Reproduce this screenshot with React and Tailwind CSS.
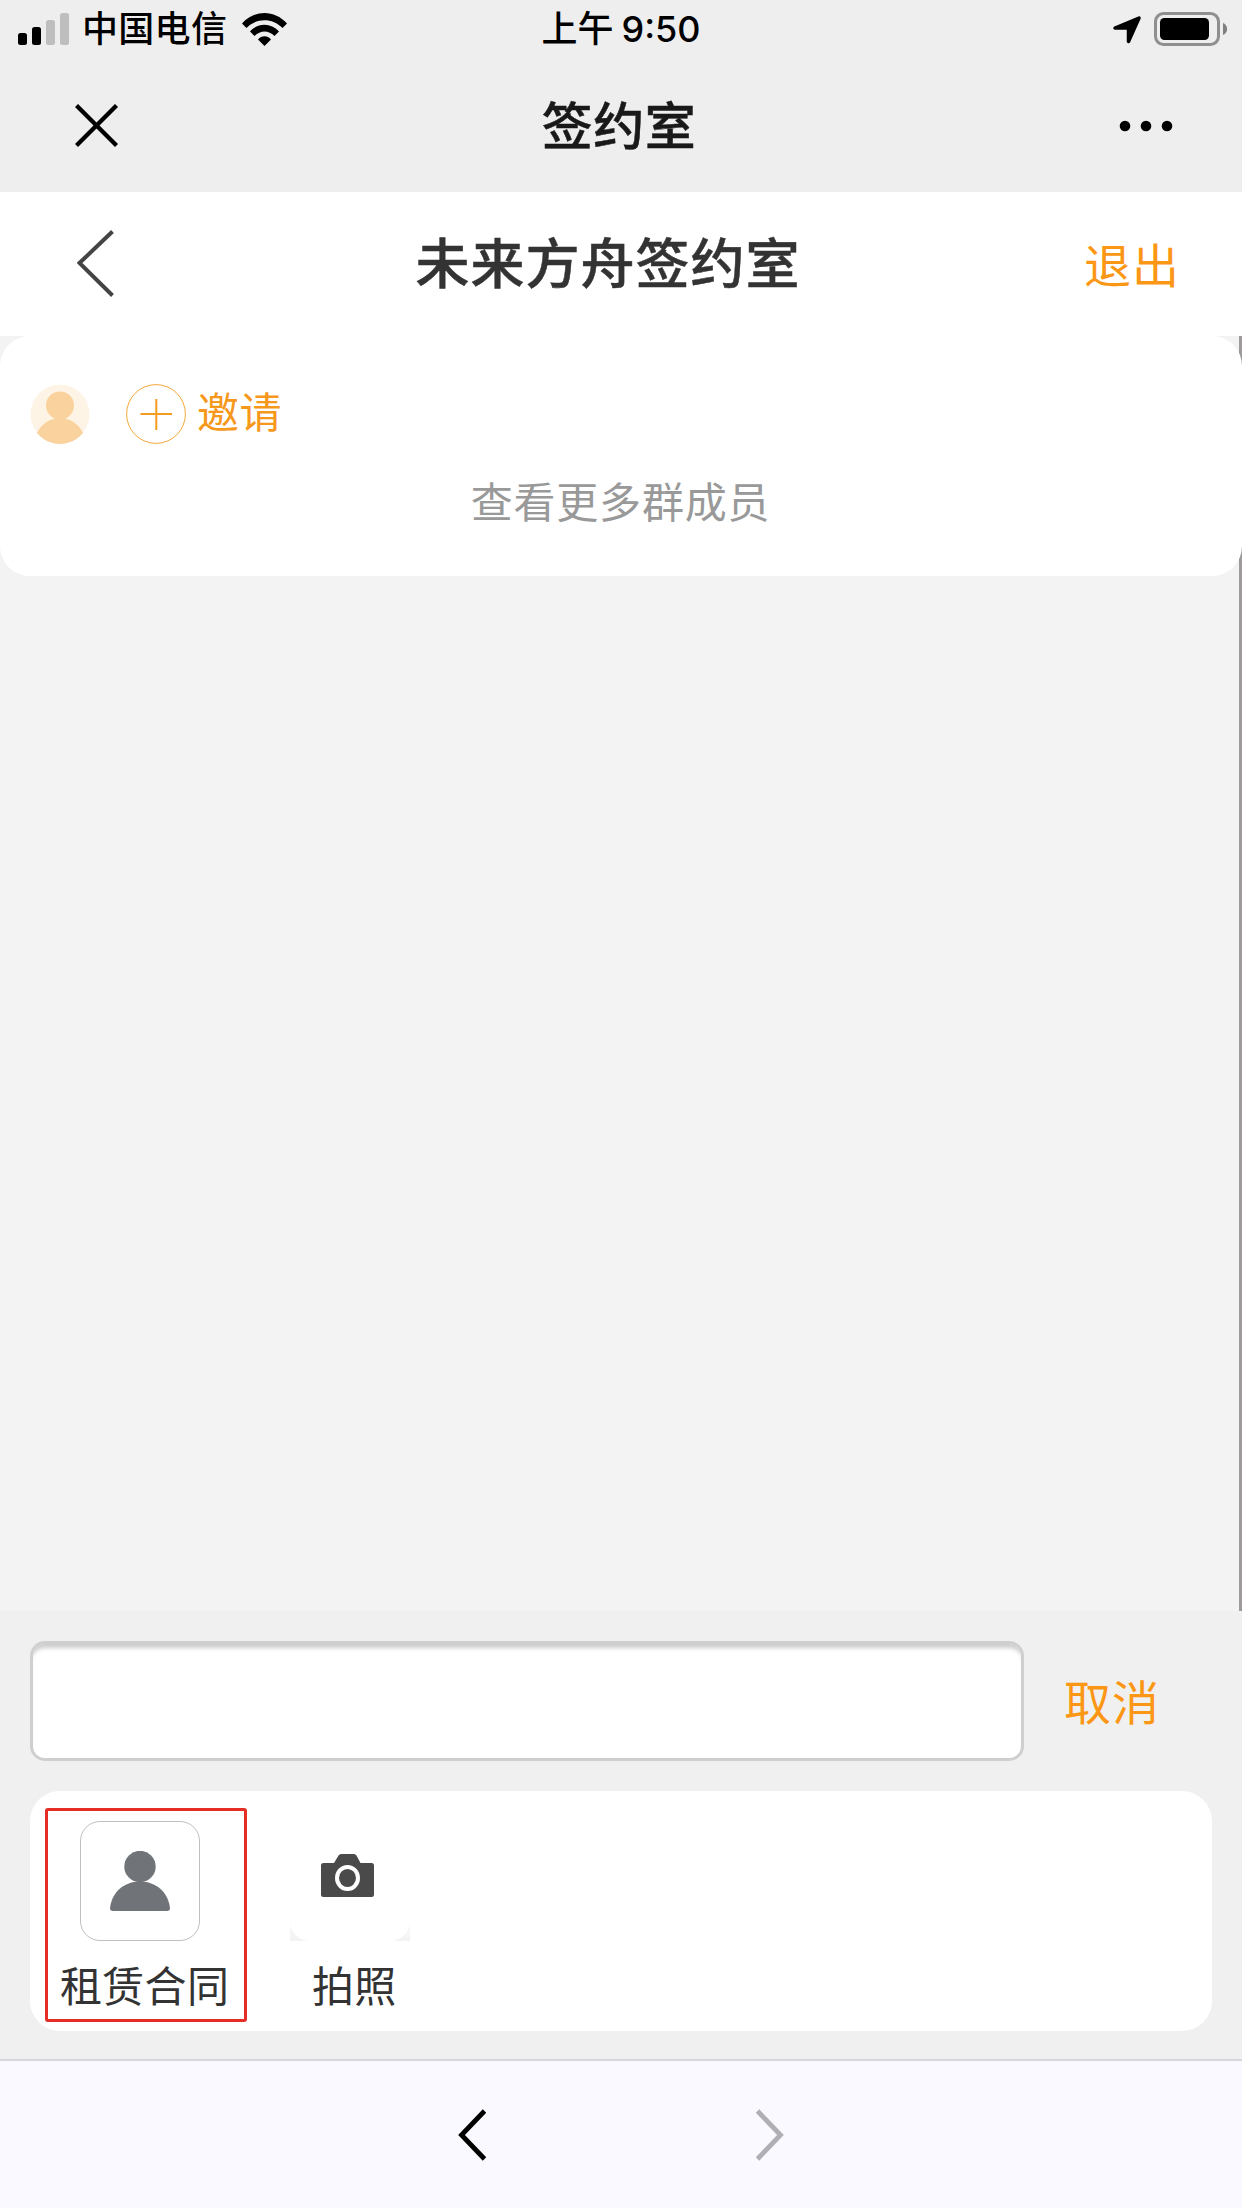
import { useState } from "react";

const actions = [
  { id: "contract", label: "租赁合同" },
  { id: "photo", label: "拍照" },
];

function StatusBar() {
  return (
    <div className="flex h-[60px] items-start justify-between text-black">
      <div className="flex w-[400px] pl-[18px]">
        <svg className="mt-[13px] h-8 w-[51px]" viewBox="0 0 51 32">
          <rect x="0" y="20" width="9" height="12" rx="2.5" />
          <rect x="14" y="14" width="9" height="18" rx="2.5" />
          <rect x="28" y="7" width="9" height="25" rx="2.5" fill="#bebebe" />
          <rect x="42" y="0" width="9" height="32" rx="2.5" fill="#bebebe" />
        </svg>
        <span className="ml-[13px] h-[60px] w-[146px] text-[36px] leading-[60px] font-medium tracking-[0.3px] whitespace-nowrap">
          中国电信
        </span>
        <svg className="mt-[13px] ml-[14px] h-[33px] w-[45px]" viewBox="0 0 45 33">
          <path d="M0 10.5C12.500 -3.500 32.500 -3.500 45 10.500L40.500 15C30.500 4.500 14.500 4.500 4.500 15Z" />
          <path d="M8 18.500C16 9.500 29 9.500 37 18.500L32.500 23C26.500 17 18.500 17 12.500 23Z" />
          <path d="M16 26.500C19.500 22.300 25.500 22.300 29 26.500L22.500 33Z" />
        </svg>
      </div>

      <div className="flex h-[60px] text-[36px] leading-[60px] font-medium whitespace-nowrap">
        <span>上午</span>
        <span className="ml-2 font-['Inter'] text-[36px] leading-[58px]">9:50</span>
      </div>

      <div className="flex w-[400px] justify-end pr-[15px]">
        <svg className="mt-4 mr-[13px] h-7 w-7" viewBox="0 0 28 28">
          <path
            d="M2 12L26 2L15.500 25.500V12Z"
            stroke="#000"
            strokeWidth="3.500"
            strokeLinejoin="round"
          />
        </svg>
        <svg className="mt-3 h-[34px] w-[73px]" viewBox="0 0 73 34">
          <rect
            x="1.500"
            y="1.500"
            width="63"
            height="31"
            rx="8"
            fill="none"
            stroke="#8f8f8f"
            strokeWidth="3"
          />
          <rect x="6" y="6" width="49" height="22" rx="4.500" />
          <path d="M69 11C74.500 13 74.500 21 69 23Z" fill="#808080" />
        </svg>
      </div>
    </div>
  );
}

function TitleBar() {
  return (
    <div className="flex h-[132px] items-center justify-between pr-[69px] pl-[75px]">
      <svg className="h-11 w-11" viewBox="0 0 44 44">
        <path d="M1.500 1.500L41.500 41.500M41.500 1.500L1.500 41.500" stroke="#000" strokeWidth="4.300" />
      </svg>
      <h1 className="pt-1 text-[51px] leading-[60px] font-medium tracking-[0.5px] text-[#191919] [-webkit-text-stroke:0.5px_#191919]">
        签约室
      </h1>
      <svg className="h-3 w-[54px]" viewBox="0 0 54 12">
        <circle cx="6" cy="6" r="5.300" />
        <circle cx="27" cy="6" r="5.300" />
        <circle cx="48" cy="6" r="5.300" />
      </svg>
    </div>
  );
}

function RoomHeader() {
  return (
    <div className="flex h-36 items-center justify-between bg-white pr-[62px] pl-[77px]">
      <svg className="h-[70px] w-[55px]" viewBox="0 0 55 70">
        <path d="M35.500 2.500L2.500 34L35.500 66.500" fill="none" stroke="#444" strokeWidth="4" />
      </svg>
      <h2 className="pt-[2px] text-[54px] leading-[60px] font-medium tracking-[1px] text-[#333] [-webkit-text-stroke:0.5px_#333]">
        未来方舟签约室
      </h2>
      <button className="pt-[6px] text-[47px] leading-[60px] tracking-[1px] text-[#fb9714]">
        退出
      </button>
    </div>
  );
}

function MemberCard() {
  return (
    <div className="relative h-60 rounded-[30px] bg-white pt-12 pl-[30px]">
      <div className="flex h-[60px] items-center">
        <svg className="h-[60px] w-[60px]" viewBox="0 0 60 60">
          <circle cx="30" cy="30" r="29.500" fill="#fef4e5" />
          <circle cx="30" cy="21.500" r="14" fill="#f9d29d" />
          <path
            d="M7 49C10.500 42 16 36.500 25 34.500C25.500 34 25 33 24.500 32H35.500C35 33 34.500 34 35 34.500C44 36.500 49.500 42 53 49C41 63.500 19 63.500 7 49Z"
            fill="#f9d29d"
          />
        </svg>
        <svg className="ml-9 h-[60px] w-[60px]" viewBox="0 0 60 60">
          <circle cx="30" cy="30" r="29.400" fill="none" stroke="#f2a93b" />
          <path d="M14.500 30H46M30.300 15V46" stroke="#f39c1f" strokeWidth="2" />
        </svg>
        <span className="ml-[11px] text-[42px] leading-[60px] tracking-[0.5px] text-[#f6981b]">
          邀请
        </span>
      </div>
      <p className="mt-[30px] pr-[31px] text-center text-[42px] leading-[60px] tracking-[0.8px] text-[#999]">
        查看更多群成员
      </p>
    </div>
  );
}

function PersonIcon() {
  return (
    <div className="flex h-[120px] w-[120px] items-center justify-center rounded-[20px] border border-[#c0c0c0] bg-white">
      <svg className="h-[60px] w-[60px]" viewBox="0 0 60 60" fill="#707378">
        <circle cx="30" cy="15.500" r="15.700" />
        <path d="M3 60Q0 60 0 57C2 41 14 30.500 30 30.500S58 41 60 57Q60 60 57 60Z" />
      </svg>
    </div>
  );
}

function CameraIcon() {
  return (
    <div className="h-[120px] w-[120px] bg-linear-to-b from-white from-70% to-[#f3f3f3]">
      <div className="flex h-full w-full rounded-[20px] bg-white pt-[33px] pl-[31px]">
        <svg className="h-[43px] w-[53px]" viewBox="0 0 53 43">
          <path
            d="M2.500 9H13L17.500 1.500Q18.500 0 20 0H33Q34.500 0 35.500 1.500L39.500 9H50.500Q53 9 53 11.500V40.500Q53 43 50.500 43H2.500Q0 43 0 40.500V11.500Q0 9 2.500 9Z"
            fill="#4a4a4a"
          />
          <ellipse cx="26.500" cy="24" rx="10.500" ry="11" fill="#4a4a4a" stroke="#fff" strokeWidth="4" />
        </svg>
      </div>
    </div>
  );
}

function ActionPanel() {
  return (
    <div className="mt-[30px] flex h-60 rounded-[30px] bg-white pt-[17px] pl-[15px]">
      <button className="flex h-[214px] w-[202px] flex-col rounded-[3px] border-[3px] border-[#e42d24] pt-[10px]">
        <div className="ml-8">
          <PersonIcon />
        </div>
        <span className="mt-[17px] ml-[12px] self-start text-[42px] leading-[60px] tracking-[0.3px] whitespace-nowrap text-[#333]">
          {actions[0].label}
        </span>
      </button>
      <button className="ml-[43px] flex w-[120px] flex-col pt-[13px]">
        <CameraIcon />
        <span className="mt-[17px] ml-[22px] self-start text-[42px] leading-[60px] tracking-[0.3px] whitespace-nowrap text-[#333]">
          {actions[1].label}
        </span>
      </button>
    </div>
  );
}

function App() {
  const [message, setMessage] = useState("");

  return (
    <div className="flex h-[2208px] w-[1242px] flex-col overflow-hidden bg-[#f3f3f3] font-['Liberation_Sans','Noto_Sans_CJK_SC',sans-serif]">
      <header className="bg-[#eee]">
        <StatusBar />
        <TitleBar />
      </header>
      <RoomHeader />

      <main className="relative h-[1275px]">
        {/* scroll indicator, the card covers its top part */}
        <div className="absolute top-0 right-0 h-full w-[3px] bg-[#9f9b9c]" />
        <MemberCard />
      </main>

      <section className="h-[448px] bg-[#f0f0f0] px-[30px] pt-[30px]">
        <div className="flex items-center">
          <input
            className="h-[120px] w-[994px] rounded-[15px] border-[3px] border-[#d0cece] bg-white px-6 text-[42px] shadow-[inset_0_7px_4px_-3px_#cccccc] outline-none"
            value={message}
            onChange={(e) => setMessage(e.target.value)}
          />
          <button className="ml-10 pt-[5px] text-[47px] leading-[60px] tracking-[1px] text-[#fb9714]">
            取消
          </button>
        </div>
        <ActionPanel />
      </section>

      <nav className="flex h-[149px] justify-center gap-[270px] border-t-2 border-[#d8d8dc] bg-[#f9f9ff] pt-12">
        <svg className="h-[52px] w-7" viewBox="0 0 28 52">
          <path d="M26.500 2L3.500 26L26.500 50" fill="none" stroke="#000" strokeWidth="4.800" />
        </svg>
        <svg className="h-[52px] w-7" viewBox="0 0 28 52">
          <path d="M1.500 2L24.500 26L1.500 50" fill="none" stroke="#b0b0b4" strokeWidth="4.800" />
        </svg>
      </nav>
    </div>
  );
}

export default App;
